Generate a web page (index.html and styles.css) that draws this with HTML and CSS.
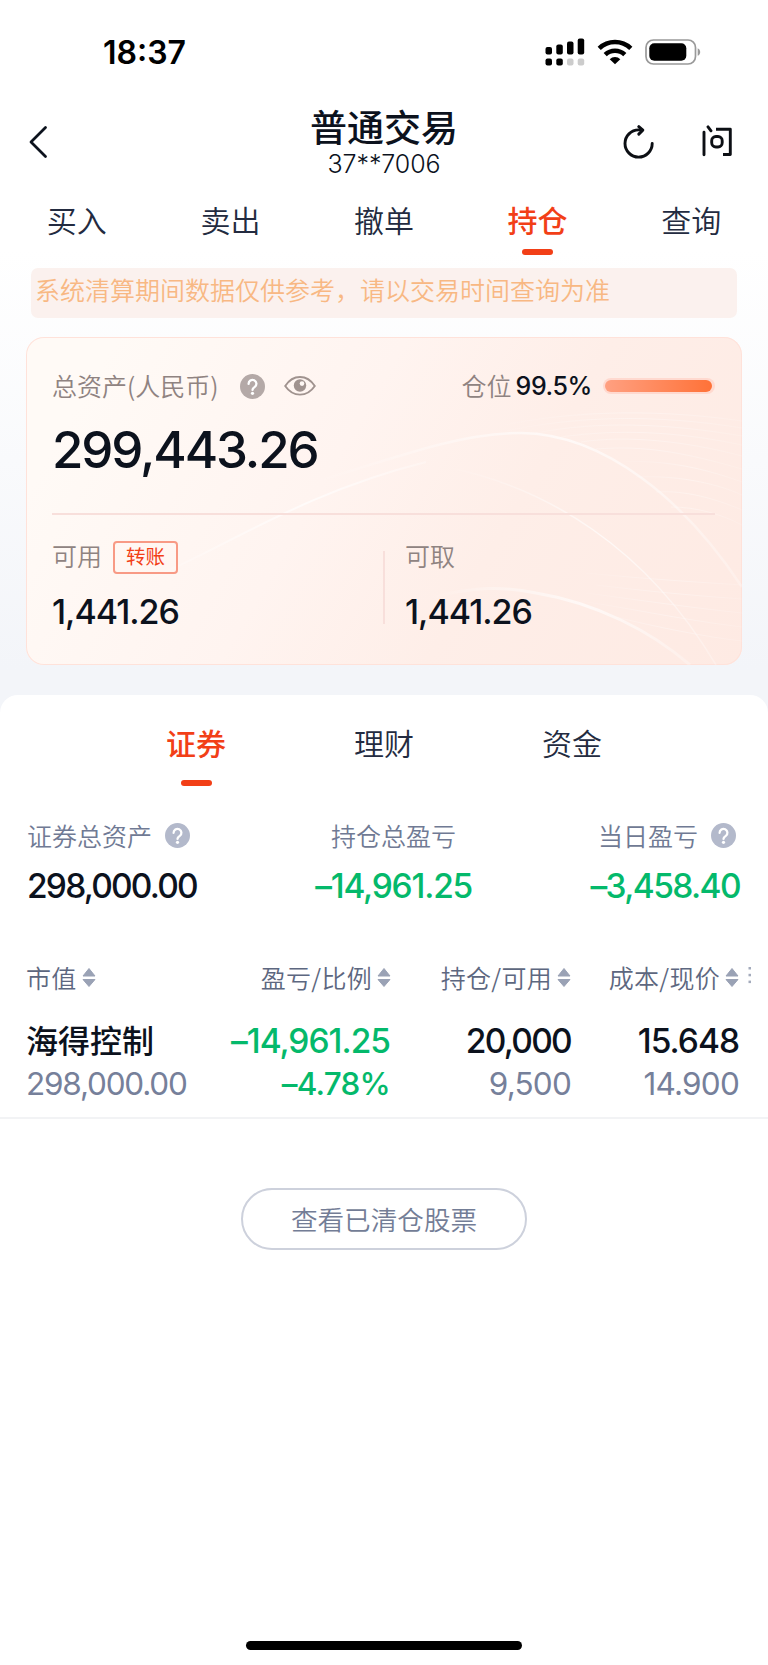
FILE: index.html
```html
<!DOCTYPE html>
<html lang="zh-CN">
<head>
    <meta charset="UTF-8">
    <meta name="viewport" content="width=device-width, initial-scale=1.0">
    <title>普通交易</title>
    <link rel="stylesheet" href="styles.css">
</head>
<body>
    <svg width="0" height="0" class="sprite">
        <symbol id="help" viewBox="0 0 25 25">
            <circle cx="12.5" cy="12.5" r="12.5" fill="currentColor"/>
            <path d="M8.600 9.900a3.900 3.900 0 1 1 6.200 3c-1.500 1.050-2.300 1.500-2.300 3" fill="none" stroke="#fff" stroke-width="2.300" stroke-linecap="round"/>
            <circle cx="12.500" cy="19.300" r="1.600" fill="#fff"/>
        </symbol>
        <symbol id="sort" viewBox="0 0 14 19">
            <path d="M7 .5 13 8H1zM7 18.500 13 11.500H1z" fill="#9aa2b5" stroke="#9aa2b5" stroke-linejoin="round"/>
        </symbol>
    </svg>

    <div class="status-bar">
        <span class="time">18:37</span>
        <div class="status-icons">
            <svg class="signal" width="40" height="28" viewBox="0 0 40 28">
                <rect x="0.500" y="9" width="6.500" height="7.500" rx="2"/>
                <rect x="11.300" y="6.500" width="6.500" height="10" rx="2"/>
                <rect x="22" y="3.500" width="6.500" height="13" rx="2"/>
                <rect x="32.700" y="0.500" width="6.500" height="16" rx="2"/>
                <rect x="0.500" y="20.500" width="6.500" height="7" rx="2"/>
                <rect x="11.300" y="20.500" width="6.500" height="7" rx="2"/>
                <rect x="22" y="20.500" width="6.500" height="7" rx="2" fill="#ccc"/>
                <rect x="32.700" y="20.500" width="6.500" height="7" rx="2" fill="#ccc"/>
            </svg>
            <svg class="wifi" width="36" height="26" viewBox="0 0 36 26">
                <g fill="none" stroke="#000" stroke-width="4.600">
                    <path d="M2.200 9.300a23 23 0 0 1 31.600 0"/>
                    <path d="M8.200 15.600a14.300 14.300 0 0 1 19.600 0"/>
                </g>
                <path d="M12.700 20.200a7.700 7.700 0 0 1 10.600 0L18 25.300z"/>
            </svg>
            <svg class="battery" width="56" height="26" viewBox="0 0 56 26">
                <rect x="1" y="1" width="49.500" height="24" rx="7.500" fill="none" stroke="#999" stroke-width="1.700"/>
                <rect x="4.300" y="4.200" width="37" height="17.600" rx="5"/>
                <path d="M52.700 9.200c3.300 1.500 3.300 6.100 0 7.600z" fill="#999"/>
            </svg>
        </div>
    </div>

    <div class="header">
        <svg class="back" width="20" height="34" viewBox="0 0 20 34">
            <path d="M17.500 2.500 3 17 17.500 31.500" fill="none" stroke="#0c121d" stroke-width="2.800" stroke-linecap="round" stroke-linejoin="round"/>
        </svg>
        <div class="heading">
            <h1>普通交易</h1>
            <div class="account">37**7006</div>
        </div>
        <div class="actions">
            <svg width="32" height="35" viewBox="0 0 32 35">
                <path d="M29.200 18.500a13.600 13.600 0 1 1-13.600-13.600H19" fill="none" stroke="#0c0f14" stroke-width="2.900" stroke-linecap="round"/>
                <path d="m15.800 1.600 4 3.500-4 4" fill="none" stroke="#0c0f14" stroke-width="2.900" stroke-linecap="round" stroke-linejoin="round"/>
            </svg>
            <svg width="32" height="34" viewBox="0 0 32 34">
                <g fill="none" stroke="#0c0f14" stroke-width="2.900">
                    <path d="M2 7.300v22.500M6 1.800l3 4" stroke-linecap="round"/>
                    <path d="M14 4.300h14.300v25.200h-7.300" stroke-linejoin="round"/>
                    <rect x="9.700" y="11.500" width="10.500" height="10.500" rx="4.200"/>
                </g>
            </svg>
        </div>
    </div>

    <div class="tabs">
        <div class="tab">买入</div>
        <div class="tab">卖出</div>
        <div class="tab">撤单</div>
        <div class="tab active">持仓</div>
        <div class="tab">查询</div>
    </div>

    <div class="overview">
        <div class="notice">系统清算期间数据仅供参考，请以交易时间查询为准</div>

        <div class="card">
            <svg class="waves" width="716" height="328" viewBox="0 0 716 328">
                <defs>
                    <linearGradient id="fade" x1="0" x2="1" y1="0" y2="0">
                        <stop offset="0" stop-color="#fff" stop-opacity="0"/>
                        <stop offset=".6" stop-color="#fff" stop-opacity=".65"/>
                        <stop offset="1" stop-color="#fff" stop-opacity=".25"/>
                    </linearGradient>
                </defs>
                <g fill="none" stroke="url(#fade)">
                    <path d="M280 148C390 113 440 96 495 96 580 97 660 165 716 250" stroke-width="2.500"/>
                    <path d="M400 262C450 248 480 250 510 256 570 266 625 294 664 328" stroke-width="3"/>
                    <path d="M420 130C520 150 620 210 690 328" stroke-width="1.500"/>
                    <path d="M100 250C180 225 260 160 400 125" stroke-width="2"/>
                </g>
                <g fill="none" stroke="url(#fade)" opacity=".5">
                    <path d="M460 92C530 75 620 70 716 84M480 94C550 79 630 77 716 91M510 96C570 84 640 86 716 99M535 100C590 92 650 94 716 108M555 105C600 98 660 104 716 119M570 112C620 108 660 116 716 132"/>
                    <path d="M590 125C640 122 680 132 716 145M610 140C650 138 690 146 716 158M630 155C660 153 690 162 716 173M645 170C670 170 695 177 716 188"/>
                    <path d="M540 262C600 270 650 282 716 290M560 256C620 264 660 270 716 276M570 248C620 254 660 258 716 262M560 236C620 242 670 245 716 248M590 280C630 290 680 300 716 304"/>
                </g>
            </svg>

            <div class="card-top">
                <span class="label">总资产(人民币)</span>
                <svg class="help" width="25" height="25"><use href="#help"/></svg>
                <svg class="eye" width="32" height="22" viewBox="0 0 32 22">
                    <path d="M1.200 11C9-1 23-1 30.800 11 23 22.500 9 22.500 1.200 11z" fill="none" stroke="#a0938f" stroke-width="1.900"/>
                    <circle cx="16" cy="10.500" r="6.200" fill="#a0938f"/>
                    <circle cx="18" cy="8.600" r="2.300" fill="#fff8f5"/>
                </svg>
                <span class="label position">仓位</span>
                <span class="percent">99.5%</span>
                <div class="meter"><div class="meter-fill" style="width: 99.5%"></div></div>
            </div>
            <div class="total">299,443.26</div>
            <div class="funds">
                <div class="fund">
                    <div class="fund-head"><span class="label">可用</span><span class="transfer">转账</span></div>
                    <div class="amount">1,441.26</div>
                </div>
                <div class="fund">
                    <div class="fund-head"><span class="label">可取</span></div>
                    <div class="amount">1,441.26</div>
                </div>
            </div>
        </div>
    </div>

    <div class="sheet">
        <div class="sub-tabs">
            <div class="tab active">证券</div>
            <div class="tab">理财</div>
            <div class="tab">资金</div>
        </div>

        <div class="summary">
            <div class="stat">
                <div class="stat-label">证券总资产<svg width="25" height="25"><use href="#help"/></svg></div>
                <div class="amount tight">298,000.00</div>
            </div>
            <div class="stat center">
                <div class="stat-label">持仓总盈亏</div>
                <div class="amount down">–14,961.25</div>
            </div>
            <div class="stat right">
                <div class="stat-label">当日盈亏<svg width="25" height="25"><use href="#help"/></svg></div>
                <div class="amount down">–3,458.40</div>
            </div>
        </div>

        <div class="grid table-head">
            <div>市值<svg width="14" height="19"><use href="#sort"/></svg></div>
            <div>盈亏/比例<svg width="14" height="19"><use href="#sort"/></svg></div>
            <div>持仓/可用<svg width="14" height="19"><use href="#sort"/></svg></div>
            <div>成本/现价<svg width="14" height="19"><use href="#sort"/></svg></div>
            <svg class="more" width="4" height="18" viewBox="0 0 4 18" fill="#a4abbc">
                <rect x=".5" y="1" width="2.500" height="2.500"/>
                <rect x=".5" y="7.800" width="2.500" height="2.500"/>
                <rect x=".5" y="14.600" width="2.500" height="2.500"/>
            </svg>
        </div>

        <div class="holding">
            <div class="grid row-main">
                <div class="stock">海得控制</div>
                <div class="down">–14,961.25</div>
                <div class="tight">20,000</div>
                <div>15.648</div>
            </div>
            <div class="grid row-sub">
                <div class="tight">298,000.00</div>
                <div class="down">–4.78%</div>
                <div>9,500</div>
                <div>14.900</div>
            </div>
        </div>

        <button class="cleared">查看已清仓股票</button>
        <div class="home-indicator"></div>
    </div>
</body>
</html>
```

FILE: styles.css
```css
* {
    margin: 0;
    padding: 0;
    box-sizing: border-box;
}

body {
    width: 768px;
    height: 1665px;
    display: flex;
    flex-direction: column;
    overflow: hidden;
    background: linear-gradient(#fff 250px, #f3f5f9 670px);
    color: #0c121d;
    font-family: Inter, "Noto Sans CJK SC", sans-serif;
}

svg {
    display: block;
    flex: none;
}

.sprite {
    position: absolute;
}

.status-bar {
    height: 100px;
    padding: 4px 67px 0 103px;
    display: flex;
    align-items: center;
    justify-content: space-between;
    color: #000;
}

.time {
    font-size: 32px;
    font-weight: 600;
    padding-top: 1px;
}

.status-icons {
    display: flex;
    align-items: center;
    gap: 12px;
}

.header {
    height: 84px;
    padding: 0 34px 0 28px;
    display: grid;
    grid-template-columns: 150px 1fr 144px;
    align-items: center;
}

.heading {
    text-align: center;
}

.heading h1 {
    font-size: 37px;
    font-weight: 500;
    line-height: 44px;
    padding-top: 1px;
}

.account {
    font-size: 25px;
    font-weight: 300;
    line-height: 27px;
    letter-spacing: -0.1px;
}

.actions {
    display: flex;
    align-items: center;
    justify-content: flex-end;
    gap: 47px;
}

.tabs {
    height: 76px;
    display: grid;
    grid-template-columns: repeat(5, 1fr);
    padding-top: 15px;
}

.tab {
    display: flex;
    flex-direction: column;
    align-items: center;
    font-size: 30px;
    font-weight: 350;
    line-height: 44px;
    color: #232b40;
}

.tab.active {
    color: #f23f17;
    font-weight: 500;
}

.tab.active::after {
    content: "";
    width: 31px;
    height: 6px;
    border-radius: 3px;
    background: #f23f17;
    margin-top: 6px;
}

.overview {
    height: 435px;
    padding: 7.5px 26px 0;
}

.notice {
    height: 50px;
    margin: 0 5px 19.5px;
    padding-left: 4px;
    border-radius: 7px;
    background: #fbf1ee;
    color: #f8b883;
    font-size: 25px;
    font-weight: 350;
    line-height: 47px;
}

.card {
    position: relative;
    height: 328px;
    padding: 35px 27px 0 26px;
    border-radius: 18px;
    background: linear-gradient(120deg, #fffaf6 10%, #fff4f0 42%, #feeee8 65%, #feeae3);
    box-shadow: inset 0 0 0 1px #ffe2da;
    overflow: hidden;
}

.waves {
    position: absolute;
    top: 0;
    left: 0;
}

.card-top,
.total,
.funds {
    position: relative;
}

.card-top {
    height: 28px;
    display: flex;
    align-items: center;
}

.label {
    font-size: 25px;
    font-weight: 350;
    line-height: 26px;
    padding-bottom: 2px;
    color: #8f8381;
    font-family: "Noto Sans CJK SC", sans-serif;
}

.help {
    margin-left: 21px;
    color: #b4a9a7;
}

.eye {
    margin-left: 19px;
}

.position {
    margin-left: auto;
}

.percent {
    margin-left: 4px;
    font-size: 25px;
    font-weight: 500;
    letter-spacing: -0.4px;
}

.meter {
    width: 112px;
    height: 16px;
    margin-left: 11px;
    margin-bottom: 1px;
    padding: 2px;
    border-radius: 8px;
    background: #ffd9cf;
}

.meter-fill {
    height: 100%;
    border-radius: 6px;
    background: linear-gradient(90deg, #ffa081, #ff7238);
}

.total {
    height: 115px;
    padding-top: 17px;
    border-bottom: 2px solid #f8dfdb;
    font-size: 51px;
    font-weight: 500;
    line-height: 66px;
    letter-spacing: -2.1px;
}

.funds {
    display: grid;
    grid-template-columns: 331px 1fr;
}

.fund {
    margin-top: 36px;
    height: 73px;
}

.fund + .fund {
    border-left: 2px solid #f8dfdb;
    padding-left: 20px;
}

.fund-head {
    height: 33px;
    margin-top: -10px;
    display: flex;
    align-items: center;
    gap: 11px;
}

.fund-head .label {
    margin-top: -4px;
}

.transfer {
    width: 65px;
    height: 33px;
    border: 2px solid #f89a85;
    border-radius: 4px;
    color: #f23f17;
    font-size: 19.5px;
    line-height: 29px;
    text-align: center;
}

.amount {
    font-size: 34px;
    font-weight: 500;
    line-height: 40px;
    letter-spacing: -1px;
}

.fund .amount {
    margin-top: 18px;
}

.down {
    color: #04b96b;
}

.sheet {
    flex: 1;
    display: flex;
    flex-direction: column;
    background: #fff;
    border-radius: 18px 18px 0 0;
}

.sub-tabs {
    display: grid;
    grid-template-columns: repeat(3, 188px);
    justify-content: center;
    height: 119px;
    padding-top: 27px;
}

.sub-tabs .tab.active::after {
    margin-top: 14px;
}

.summary {
    display: flex;
    justify-content: space-between;
    height: 138px;
    padding: 5px 28px 0 27px;
}

.stat-label {
    display: flex;
    align-items: center;
    gap: 13px;
    height: 32px;
    font-size: 25px;
    font-weight: 350;
    color: #707a94;
}

.stat-label svg {
    color: #b3b9cb;
}

.stat .amount {
    margin-top: 15px;
    font-size: 33.5px;
    letter-spacing: -1.2px;
}

.stat .amount.tight {
    letter-spacing: -1.8px;
}

.stat.right .amount {
    letter-spacing: -1.6px;
}

.center .stat-label {
    justify-content: center;
}

.right .stat-label {
    justify-content: flex-end;
    padding-right: 4px;
}

.grid {
    display: grid;
    grid-template-columns: 180px 184px 181px 168px;
    padding-left: 26px;
    justify-items: end;
    align-items: center;
}

.grid > :first-child {
    justify-self: start;
}

.table-head {
    grid-template-columns: 180px 185px 180px 168px 13px;
    height: 50px;
    font-size: 25px;
    font-weight: 350;
    color: #5d6780;
    letter-spacing: 0.3px;
    font-family: "Noto Sans CJK SC", sans-serif;
}

.table-head div {
    display: flex;
    align-items: center;
    gap: 5px;
}

.table-head .more {
    margin-top: -4px;
}

.holding {
    height: 117px;
    padding-top: 14px;
    border-bottom: 2px solid #f2f3f5;
}

.row-main {
    height: 45px;
    font-size: 33.5px;
    font-weight: 500;
    letter-spacing: -1px;
}

.row-main .stock {
    font-size: 32px;
    letter-spacing: 0;
    padding-bottom: 3px;
}

.row-main .tight {
    letter-spacing: -1.7px;
}

.row-sub {
    height: 44px;
    font-size: 31.5px;
    letter-spacing: -0.8px;
    color: #76809a;
}

.row-sub .tight {
    letter-spacing: -1.2px;
}

.row-sub .down {
    color: #04b96b;
    font-weight: 500;
}

.cleared {
    align-self: center;
    width: 286px;
    height: 62px;
    margin-top: 69px;
    border: 2px solid #cdd1dc;
    border-radius: 31px;
    background: #fff;
    color: #737d96;
    font: 350 26.6px "Noto Sans CJK SC", sans-serif;
    padding-bottom: 2px;
}

.home-indicator {
    align-self: center;
    width: 276px;
    height: 9px;
    margin-top: auto;
    margin-bottom: 15px;
    border-radius: 5px;
    background: #000;
}
```
